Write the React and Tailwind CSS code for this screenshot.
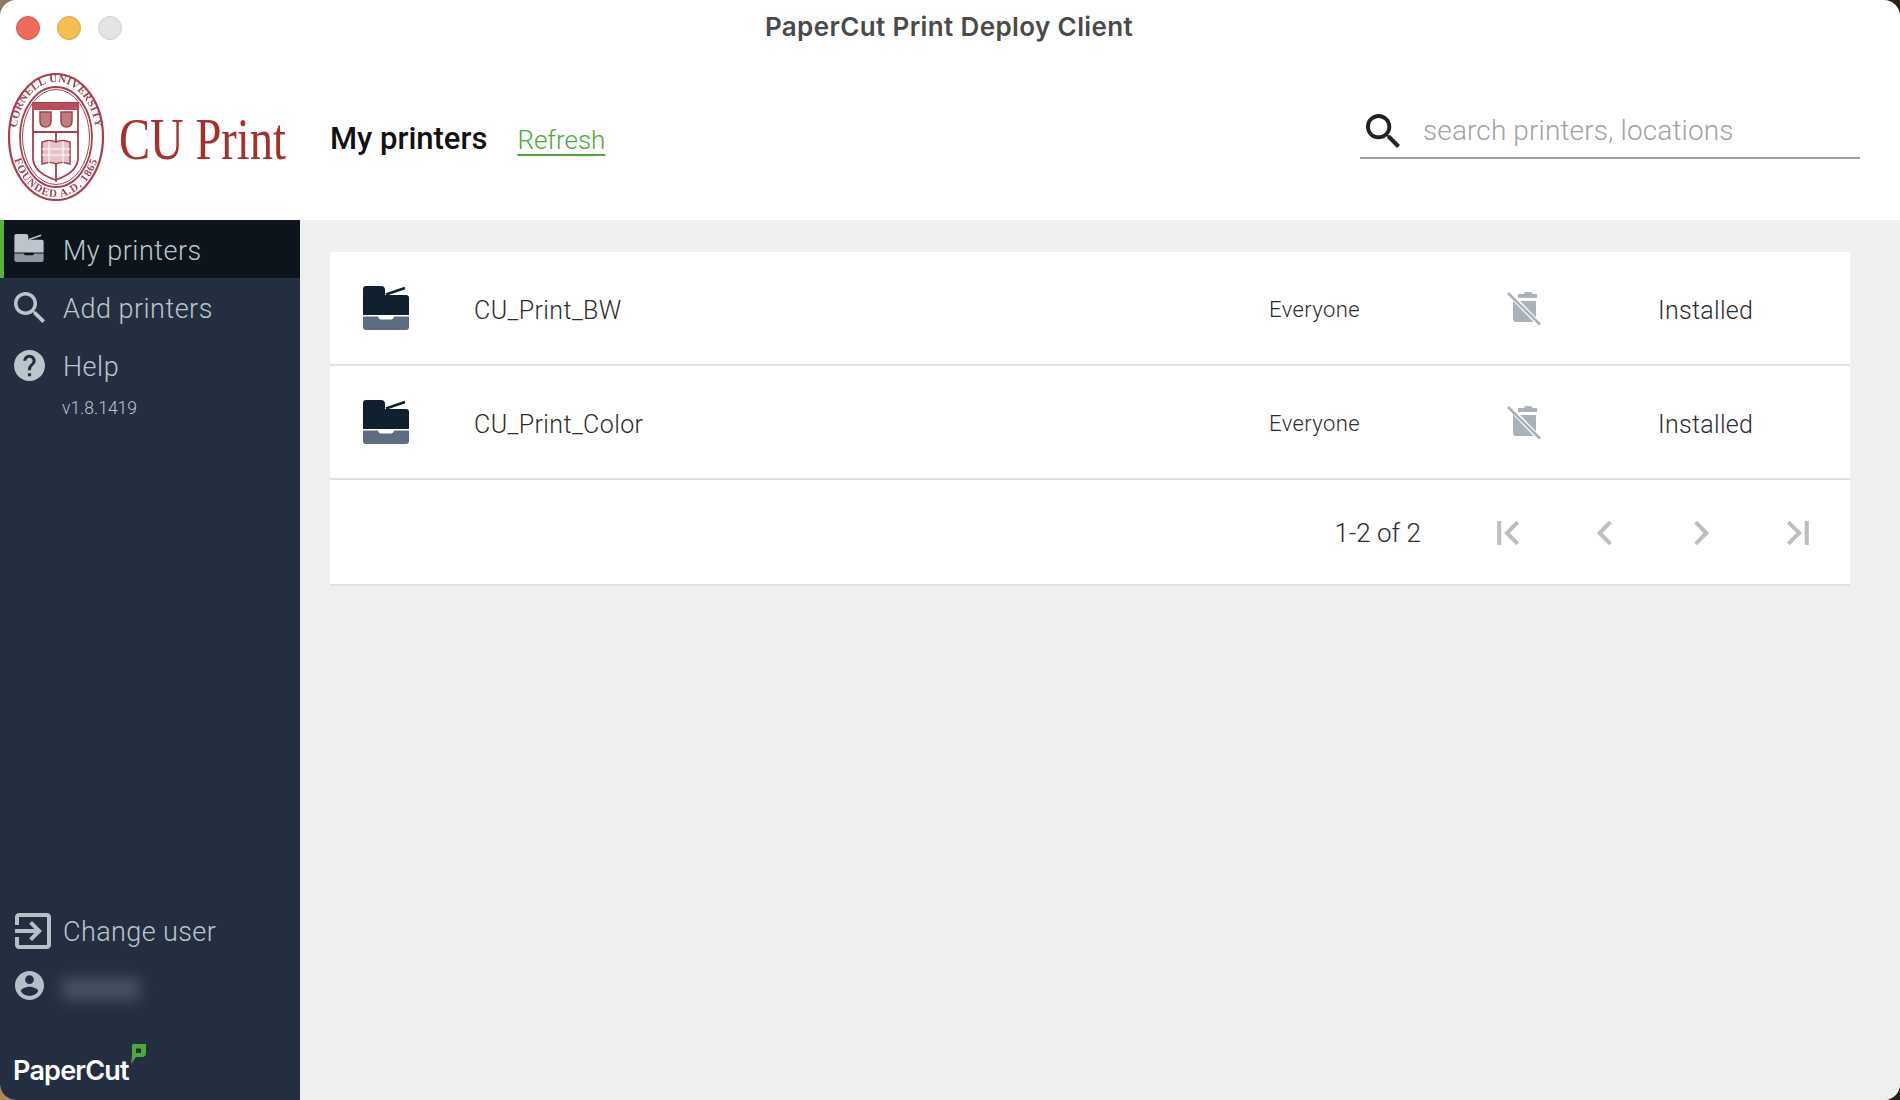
import React from "react";

const SEARCH = "M15.5 14h-.79l-.28-.27C15.41 12.59 16 11.11 16 9.5 16 5.91 13.09 3 9.5 3S3 5.91 3 9.5 5.91 16 9.5 16c1.61 0 3.09-.59 4.23-1.57l.27.28v.79l5 4.99L20.49 19l-4.99-5zm-6 0C7.01 14 5 11.99 5 9.5S7.01 5 9.5 5 14 7.01 14 9.5 11.99 14 9.5 14z";

const printers = ["CU_Print_BW", "CU_Print_Color"];

const PrinterIcon = ({ top, tray, className }) => (
  <svg viewBox="0 0 46 44" className={className}>
    <path d="M3 0h15a4 4 0 0 1 4 4v5h21a3 3 0 0 1 3 3v17H0V3a3 3 0 0 1 3-3z" fill={top} />
    <path d="M23 8.5L42 2" stroke={top} strokeWidth="2.6" fill="none" />
    <path d="M0 30.5h15c.5 2 1.5 3 3 3h10c1.500 0 2.500-1 3-3h15V41a3 3 0 0 1-3 3H3a3 3 0 0 1-3-3z" fill={tray} />
  </svg>
);

const TrashOff = () => (
  <svg viewBox="0 0 34 36" className="w-[34px] h-[36px]">
    <path d="M6 11h23v18a3 3 0 0 1-3 3H9a3 3 0 0 1-3-3z" fill="#a9b1ba" />
    <path d="M11 4h6l1-2h6l2 2h4v4H11z" fill="#a9b1ba" />
    <path d="M2 3l30 31" stroke="#fff" strokeWidth="5" fill="none" />
    <path d="M1 3l32 31.500" stroke="#a9b1ba" strokeWidth="2.600" fill="none" />
  </svg>
);

const PageIcon = ({ d, bar }) => (
  <div className="w-[48px] h-[48px] flex items-center justify-center">
    <svg viewBox="0 0 24 24" className="w-[26px] h-[26px]" fill="none" stroke="#bdbdbd" strokeWidth="3.600">
      <path d={d} />
      {bar && <path d={bar} strokeWidth="3.800" />}
    </svg>
  </div>
);

const Logo = () => (
  <svg width="340" height="150" viewBox="0 0 340 150" className="shrink-0 -mr-[10px]">
    <g className="blur-[0.6px]" fill="none" stroke="#a8404c">
      <ellipse cx="56" cy="77" rx="47" ry="63" strokeWidth="2.200" />
      <ellipse cx="56" cy="77" rx="36" ry="50" strokeWidth="1.800" />
      <ellipse cx="56" cy="77" rx="33.500" ry="47.500" strokeWidth="1" />
      <defs>
        <path id="sealTop" d="M16 77A40 55 0 0 1 96 77" />
        <path id="sealBottom" d="M11 77A45 60 0 0 0 101 77" />
      </defs>
      <text fontFamily="'Liberation Serif', serif" fontSize="11" fontWeight="700" fill="#a8404c" stroke="none" letterSpacing="0.300">
        <textPath href="#sealTop" startOffset="50%" textAnchor="middle">CORNELL UNIVERSITY</textPath>
      </text>
      <text fontFamily="'Liberation Serif', serif" fontSize="11" fontWeight="700" fill="#a8404c" stroke="none" letterSpacing="1">
        <textPath href="#sealBottom" startOffset="50%" textAnchor="middle">FOUNDED A.D. 1865</textPath>
      </text>
      <path d="M33 43h45v55c0 12-11 18-22.500 22C44 116 33 110 33 98z" strokeWidth="1.800" fill="#fff" />
      <path d="M33 43h45v7H33z" fill="#b5505c" stroke="none" />
      <path d="M33 72h45M56 72v50" strokeWidth="1.800" />
      <path d="M40 52h11v9c0 4-2.500 6-5.500 6s-5.500-2-5.500-6zM61 52h11v9c0 4-2.500 6-5.500 6s-5.500-2-5.500-6z" fill="#c47a84" strokeWidth="1.500" />
      <path d="M42 82c5-2 10-2 14 0 4-2 9-2 14 0v22c-5-2-10-2-14 0-4-2-9-2-14 0z" fill="#e6c3c8" strokeWidth="1.500" />
      <path d="M42 89h28M42 95h28M49 81v23M63 81v23" strokeWidth="1" stroke="#fff" />
    </g>
    <text x="119" y="99" className="blur-[0.4px]" fontFamily="'Liberation Serif', serif" fontSize="60" fill="#a5302e" textLength="167" lengthAdjust="spacingAndGlyphs">CU Print</text>
  </svg>
);

const NavItem = ({ active, icon, label }) => (
  <div className={`h-[58px] flex items-center ${active ? "bg-[#0d141c] border-l-4 border-[#5cb040] pl-[10px]" : "pl-[14px]"}`}>
    <div className="w-[49px] shrink-0 flex">{icon}</div>
    <span className="mt-[4px] text-[27px] font-light tracking-[0.5px] text-[#bcc5cc]">{label}</span>
  </div>
);

const App = () => {
  return (
    <div className="h-screen w-full bg-[conic-gradient(#2a2115_0deg,#2a2115_180deg,#b08a4a_190deg,#b08a4a_270deg,#8a7a60_300deg)] font-['Roboto',sans-serif]">
      <div className="h-full w-full flex flex-col overflow-hidden rounded-[16px] bg-white">
        <div className="h-[54px] shrink-0 relative flex items-center justify-center">
          <div className="absolute left-[16px] top-[16px] flex gap-[17px]">
            <div className="w-[24px] h-[24px] rounded-full bg-[#ee6a5e] border border-[#d9534a]"></div>
            <div className="w-[24px] h-[24px] rounded-full bg-[#f5bf4f] border border-[#d9a43a]"></div>
            <div className="w-[24px] h-[24px] rounded-full bg-[#e4e4e4] border border-[#cfcfcf]"></div>
          </div>
          <span className="text-[26px] font-semibold text-[#4a4a4a] font-['Inter',sans-serif] tracking-[0.38px] -mt-[2px] -ml-[2px]">PaperCut Print Deploy Client</span>
        </div>

        <div className="h-[166px] shrink-0 flex items-start">
          <div className="w-[330px] shrink-0 pt-[6px]"><Logo /></div>
          <div className="mt-[66px] flex items-baseline gap-[30px]">
            <span className="text-[31px] leading-[38px] font-medium text-[#111]">My printers</span>
            <span className="text-[26px] font-light text-[#4fa83d] underline decoration-2 underline-offset-[5px]">Refresh</span>
          </div>
          <div className="ml-auto mr-[40px] mt-[46px] w-[500px] h-[59px] border-b-2 border-[#a0a0a0] flex items-center pl-[6px] pt-[4px]">
            <svg viewBox="3 3 17.500 17.500" className="w-[34px] h-[34px] shrink-0" fill="#212121"><path d={SEARCH} /></svg>
            <span className="ml-[23px] text-[28px] tracking-[0.12px] font-light text-[#a3a3a3]">search printers, locations</span>
          </div>
        </div>

        <div className="flex-1 flex min-h-0">
          <div className="w-[300px] shrink-0 bg-[#232f41] flex flex-col justify-between">
            <div>
              <NavItem active label="My printers" icon={<PrinterIcon top="#bcc5cc" tray="#8d98a3" className="w-[30px] h-[28px] -mt-[2px]" />} />
              <NavItem label="Add printers" icon={<svg viewBox="3 3 17.500 17.500" className="w-[31px] h-[31px]" fill="#bcc5cc"><path d={SEARCH} /></svg>} />
              <NavItem label="Help" icon={<svg viewBox="2 2 20 20" className="w-[31px] h-[31px]" fill="#bcc5cc"><path d="M12 2C6.480 2 2 6.480 2 12s4.480 10 10 10 10-4.480 10-10S17.520 2 12 2zm1 17h-2v-2h2v2zm2.070-7.750l-.9.920C13.450 12.900 13 13.500 13 15h-2v-.5c0-1.100.450-2.100 1.170-2.830l1.240-1.260c.370-.360.590-.860.590-1.410 0-1.100-.9-2-2-2s-2 .9-2 2H8c0-2.210 1.790-4 4-4s4 1.790 4 4c0 .880-.360 1.680-.930 2.250z" /></svg>} />
              <div className="pl-[62px] mt-[1px] text-[17.500px] font-light text-[#bcc5cc]">v1.8.1419</div>
            </div>
            <div className="flex flex-col pb-[12px]">
              <div className="h-[58px] flex items-center pl-[15px]">
                <svg viewBox="3 3 18 18" className="w-[36px] h-[36px] shrink-0" fill="#b5bfc8"><path d="M10.090 15.590L11.500 17l5-5-5-5-1.410 1.410L12.670 11H3v2h9.670l-2.580 2.590zM19 3H5c-1.110 0-2 .9-2 2v4h2V5h14v14H5v-4H3v4c0 1.100.890 2 2 2h14c1.100 0 2-.9 2-2V5c0-1.100-.9-2-2-2z" /></svg>
                <span className="ml-[12px] mt-[2px] text-[27px] font-light tracking-[0.4px] text-[#bcc5cc]">Change user</span>
              </div>
              <div className="h-[46px] flex items-center pl-[15px] mt-[2px]">
                <svg viewBox="2 2 20 20" className="w-[29px] h-[29px] shrink-0" fill="#b5bfc8"><path d="M12 2C6.480 2 2 6.480 2 12s4.480 10 10 10 10-4.480 10-10S17.520 2 12 2zm0 3c1.660 0 3 1.340 3 3s-1.340 3-3 3-3-1.340-3-3 1.340-3 3-3zm0 14.200c-2.500 0-4.710-1.280-6-3.220.030-1.990 4-3.080 6-3.080 1.990 0 5.970 1.090 6 3.080-1.290 1.940-3.500 3.220-6 3.220z" /></svg>
                <div className="ml-[18px] mt-[8px] w-[78px] h-[22px] bg-[#465262] blur-[7px]"></div>
              </div>
              <div className="relative ml-[13px] mt-[28px] h-[52px] w-[140px] flex items-end">
                <span className="text-[27px] leading-[34px] font-semibold text-white tracking-[-0.8px] font-['Inter',sans-serif]">PaperCut</span>
                <svg viewBox="0 0 16 20" className="absolute left-[117px] top-[8px] w-[16px] h-[20px]">
                  <path d="M3 0h13v9a4 4 0 0 1-4 4H6l-5 7 1-8V2a2 2 0 0 1 1-2z" fill="#4fa83d" />
                  <rect x="6" y="4.500" width="5" height="4.500" fill="#232f41" />
                </svg>
              </div>
            </div>
          </div>

          <div className="flex-1 bg-[#eeeff1] pt-[32px] pl-[30px] pr-[50px]">
            <div className="bg-white border-b-2 border-[#e0e0e0]">
              {printers.map((name) => (
                <div key={name} className="h-[114px] border-b-2 border-[#e0e0e0] pl-[33px] grid grid-cols-[111px_795px_238px_151px_1fr] items-center">
                  <PrinterIcon top="#10202f" tray="#5f6d82" className="w-[46px] h-[44px]" />
                  <span className="mt-[5px] text-[25px] tracking-[0.4px] font-light text-[#2d2d2d]">{name}</span>
                  <span className="mt-[3px] text-[22px] tracking-[0.4px] font-light text-[#2d2d2d]">Everyone</span>
                  <TrashOff />
                  <span className="mt-[5px] text-[25px] tracking-[0.3px] font-light text-[#2d2d2d]">Installed</span>
                </div>
              ))}
              <div className="h-[104px] flex items-center justify-end pr-[29px] pt-[2px]">
                <span className="text-[26px] font-light text-[#2d2d2d] mr-[64px]">1-2 of 2</span>
                <div className="flex gap-[48px]">
                  <PageIcon d="M20 2L10 12l10 10" bar="M3 1v22" />
                  <PageIcon d="M17 2L7 12l10 10" />
                  <PageIcon d="M7 2l10 10L7 22" />
                  <PageIcon d="M4 2l10 10L4 22" bar="M21 1v22" />
                </div>
              </div>
            </div>
          </div>
        </div>
      </div>
    </div>
  );
};

export default App;
